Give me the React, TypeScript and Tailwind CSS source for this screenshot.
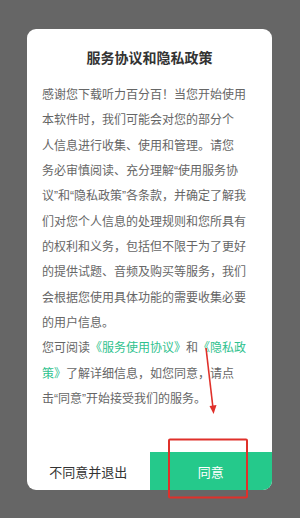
import React from "react";

const font = { fontFamily: '"Liberation Sans", "Noto Sans CJK SC", sans-serif' };

const lines = [
  "感谢您下载听力百分百！当您开始使用",
  "本软件时，我们可能会对您的部分个",
  "人信息进行收集、使用和管理。请您",
  "务必审慎阅读、充分理解“使用服务协",
  "议”和“隐私政策”各条款，并确定了解我",
  "们对您个人信息的处理规则和您所具有",
  "的权利和义务，包括但不限于为了更好",
  "的提供试题、音频及购买等服务，我们",
  "会根据您使用具体功能的需要收集必要",
  "的用户信息。",
];

export default function App() {
  return (
    <div
      className="relative h-[518px] w-[300px] overflow-hidden bg-[#666666] pt-[29px]"
      style={font}
    >
      <div className="mx-[27px] w-[245px] overflow-hidden rounded-[9px] bg-white">
        <div className="pt-[18px] text-center text-[14px] font-bold leading-[22px] text-[#333333]">
          服务协议和隐私政策
        </div>

        <div className="mt-[14px] px-[15px] text-[12px] leading-[25.33px] text-[#666666]">
          {lines.map((l, i) => (
            <div key={i} className="whitespace-nowrap">
              {l}
            </div>
          ))}
          <div className="whitespace-nowrap">
            您可阅读<span className="text-[#2fc28e]">《服务使用协议》</span>和
            <span className="text-[#2fc28e]">《隐私政</span>
          </div>
          <div className="whitespace-nowrap">
            <span className="text-[#2fc28e]">策》</span>了解详细信息，如您同意，请点
          </div>
          <div className="whitespace-nowrap">击“同意”开始接受我们的服务。</div>
        </div>

        <div className="mt-[40px] flex h-[38px]">
          <button className="flex flex-1 items-center justify-center pt-[3px] text-[13px] text-[#333333]">
            不同意并退出
          </button>
          <button className="flex flex-1 items-center justify-center bg-[#25c98b] pt-[3px] text-[13px] text-white">
            同意
          </button>
        </div>
      </div>

      {/* red annotation on top of the screenshot */}
      <svg
        className="pointer-events-none absolute left-0 top-0"
        width="300"
        height="518"
        viewBox="0 0 300 518"
      >
        <line x1="206" y1="348" x2="213" y2="408" stroke="#e0302a" strokeWidth="1.6" />
        <path d="M209.5 406 L216.5 405 L213.6 414 Z" fill="#e0302a" />
        <rect
          x="169"
          y="439.5"
          width="78"
          height="58"
          rx="1"
          fill="none"
          stroke="#e0302a"
          strokeWidth="2"
        />
      </svg>
    </div>
  );
}
